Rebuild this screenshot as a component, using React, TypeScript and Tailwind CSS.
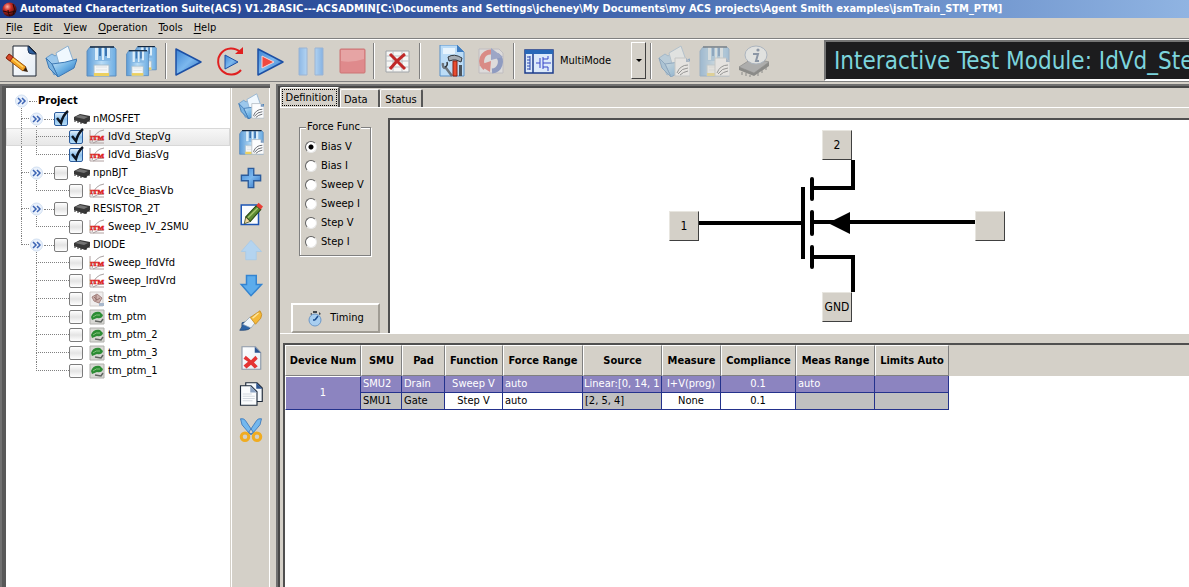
import { useState } from 'react';
import type { ReactNode } from 'react';

/* ---------- icons ---------- */

function Defs() {
  return (
    <svg width="0" height="0" className="absolute" aria-hidden="true">
      <defs>
        <linearGradient id="blue" x1="0" y1="0" x2="1" y2="1">
          <stop offset="0" stopColor="#3c84d4" />
          <stop offset="0.5" stopColor="#7cb8ee" />
          <stop offset="1" stopColor="#2a6cc0" />
        </linearGradient>
        <linearGradient id="folder" x1="0" y1="0" x2="1" y2="1">
          <stop offset="0" stopColor="#d4ebfa" />
          <stop offset="0.5" stopColor="#6bb0e4" />
          <stop offset="1" stopColor="#1f63b4" />
        </linearGradient>
        <linearGradient id="disk" x1="0" y1="0" x2="1" y2="0">
          <stop offset="0" stopColor="#5c9cd8" />
          <stop offset="0.5" stopColor="#b8dcf6" />
          <stop offset="1" stopColor="#6cace2" />
        </linearGradient>
        <linearGradient id="page" x1="0" y1="0" x2="1" y2="1">
          <stop offset="0" stopColor="#ffffff" />
          <stop offset="1" stopColor="#e4ecf4" />
        </linearGradient>
        <linearGradient id="bar" x1="0" y1="0" x2="1" y2="0">
          <stop offset="0" stopColor="#8db8e6" />
          <stop offset="0.5" stopColor="#c6e2f8" />
          <stop offset="1" stopColor="#86b2e2" />
        </linearGradient>
        <radialGradient id="ball" cx="0.35" cy="0.3" r="0.7">
          <stop offset="0" stopColor="#ffb0a4" />
          <stop offset="0.4" stopColor="#c82c24" />
          <stop offset="1" stopColor="#3c0808" />
        </radialGradient>
      </defs>
    </svg>
  );
}

function Icon({ size = 32, children, faded }: { size?: number; children: ReactNode; faded?: boolean }) {
  return (
    <svg width={size} height={size} viewBox="0 0 32 32" fill="none" aria-hidden="true" className={faded ? 'shrink-0 opacity-45' : 'shrink-0'}>
      {children}
    </svg>
  );
}

function NewIcon() {
  return (
    <Icon>
      <path d="M8 1h16l7 7v23H8z" fill="url(#page)" stroke="#1c2430" />
      <path d="M23 1l8 8h-4q-4 0-4-4z" fill="#2f5f9c" stroke="#1c3458" />
      <path d="M4 9l17 13-3 4L1 13z" fill="#f5a623" stroke="#9a5410" />
      <path d="M3 10l15 12" stroke="#ffd76a" strokeWidth="1.5" />
      <path d="M1 13l3-4 4 3-3 4z" fill="#d64a2a" stroke="#8a2414" />
      <path d="M21 22l-3 4 5 1z" fill="#3a2410" />
    </Icon>
  );
}

function FolderShape() {
  return (
    <>
      <path d="M1 13l6-4 3 2 9-6 4 18-14 7z" fill="#9cc8ec" stroke="#6c9cc8" />
      <path d="M11 8l12-7 6 17-13 8z" fill="#f0f8fe" stroke="#8cb0d0" />
      <path d="M7 19q13-1 25-5l-3 9-16 9z" fill="url(#folder)" stroke="#3c78b4" />
      <path d="M1 13l6 6 6 13-9-9z" fill="#7cb4e2" stroke="#3c78b4" />
    </>
  );
}

function DiskShape() {
  return (
    <>
      <path d="M5 2h24l2 2v27H2V6z" fill="url(#disk)" stroke="#5c8cbc" />
      <path d="M8 2h18v14H8z" fill="#84b8e4" />
      <path d="M10 2h3v13h-3zM17 2h2v13h-2zM22 2h3v11h-3z" fill="#dceefa" />
      <path d="M14 3h2v8h-2zM20 3h2v8h-2z" fill="#3c74b0" />
      <path d="M5 2h24" stroke="#14263c" strokeWidth="1.5" />
      <path d="M9 20h15v11H9z" fill="#f4f6f6" stroke="#a4bccc" />
      <path d="M9 28h15v3H9z" fill="#ecd060" />
      <path d="M11 22h11M11 25h11" stroke="#dce0e4" />
    </>
  );
}

/* Small curve sheet laid over the folder and disk icons */
function CurveSheet() {
  return (
    <>
      <path d="M17 13h11l4 4v14H17z" fill="#fbfcfd" stroke="#b4bcc4" />
      <path d="M28 13v4h4z" fill="#7898c0" />
      <path d="M19 28q3-8 11-8M20 29q4-6 10-6M22 30q3-3 8-4" stroke="#4c5058" />
    </>
  );
}

function SaveAllIcon() {
  return (
    <Icon>
      <g transform="translate(9 0) scale(0.72 0.8)"><DiskShape /></g>
      <g transform="translate(0 4) scale(0.76 0.86)"><DiskShape /></g>
    </Icon>
  );
}

function PlayIcon({ inner }: { inner?: boolean }) {
  return (
    <Icon>
      <path d="M4 4l25 13L4 30z" fill="url(#blue)" stroke="#1c4fa4" strokeWidth="1.5" strokeLinejoin="round" />
      {inner && <path d="M8 11l12 6-12 6z" fill="#f04840" stroke="#fcd4d0" />}
    </Icon>
  );
}

function RepeatIcon() {
  return (
    <Icon>
      <path d="M27 7A13 13 0 1 0 28 25" stroke="#e02020" strokeWidth="2" />
      <path d="M22 9h8V2z" fill="#e02020" />
      <path d="M12 10l13 7-13 7z" fill="url(#blue)" stroke="#1c4fa4" strokeLinejoin="round" />
    </Icon>
  );
}

function PauseIcon() {
  return (
    <Icon>
      <path d="M4 3h8v27H4zM20 3h8v27h-8z" fill="url(#bar)" stroke="#9ab4d4" />
    </Icon>
  );
}

function StopIcon() {
  return (
    <Icon>
      <rect x="4" y="4" width="25" height="24" rx="1" fill="#df8a8c" stroke="#cc7474" />
      <path d="M5 5h23v9q-12 4-23 2z" fill="#e6a4a4" />
    </Icon>
  );
}

function ClearGridIcon() {
  return (
    <Icon>
      <path d="M5 6h23v21H5z" fill="#f6f6f4" stroke="#a0a4a8" />
      <path d="M5 11h23M5 16h23M5 22h23M12 6v21M21 6v21" stroke="#bcc0c4" />
      <path d="M9 9q8 8 15 15M24 9q-8 6-15 15" stroke="#c02828" strokeWidth="3" />
    </Icon>
  );
}

function ToolsIcon() {
  return (
    <Icon>
      <path d="M5 0h17l7 7v24H5z" fill="#bcdcf6" stroke="#5890c8" />
      <path d="M22 0v7h7z" fill="#3f7cc0" />
      <path d="M8 3h12v6H8z" fill="#e8f4fd" />
      <path d="M8 18q-1 5 3 5l6 8" stroke="#6c747c" strokeWidth="2.5" />
      <path d="M12 17q1 4-2 5" stroke="#30363c" strokeWidth="1.5" />
      <path d="M13 12q6-4 14 1l-1 4-5-2h-3l-4 1z" fill="#a4acb4" stroke="#30363c" />
      <path d="M18 16h4v15h-4z" fill="#e84c30" stroke="#8c2010" />
      <path d="M24 20h3v11h-3z" fill="#4c545c" />
    </Icon>
  );
}

function RefreshIcon() {
  return (
    <Icon faded>
      <path d="M4 4h20l4 4v20H4z" fill="#e8eaf2" stroke="#a8a8b8" />
      <path d="M16 7A9 9 0 0 0 10 23" stroke="#e03838" strokeWidth="5" />
      <path d="M4 20l11 7 1-11z" fill="#e03838" />
      <path d="M17 26A9 9 0 0 0 22 10" stroke="#3c5cb8" strokeWidth="5" />
      <path d="M28 12L16 3v12z" fill="#5c74c4" />
    </Icon>
  );
}

function ModuleIcon() {
  return (
    <Icon>
      <path d="M2 5h28v23H2z" fill="#dceafa" stroke="#1c3c8c" strokeWidth="1.5" />
      <path d="M2 5h28v4H2z" fill="#2868b8" />
      <path d="M10 9v19" stroke="#1c3c8c" strokeWidth="1.5" />
      <path d="M4 12h3M4 15h3M4 18h3M4 21h3M4 24h3M7 11v14" stroke="#2c48b0" />
      <path d="M13 18h4M17 13v10M20 12v12M20 14h5v-3M20 18h8M20 22h5v4" stroke="#3444c8" />
    </Icon>
  );
}

function InfoChipIcon() {
  return (
    <Icon faded>
      <path d="M1 22l14-9 16 4-15 11z" fill="#80848c" stroke="#54585c" />
      <path d="M1 22l15 6v3L1 25zM16 28l15-11v4L16 31z" fill="#34383c" />
      <path d="M4 27v3M8 28v3M12 30v2M20 28v3M24 25v3M28 22v3" stroke="#34383c" />
      <ellipse cx="18" cy="10" rx="11" ry="9" fill="#f0f6fc" stroke="#7c94b4" />
      <path d="M16 9h4l-2 7h3M15 9h2" stroke="#34507c" strokeWidth="2" />
      <circle cx="20" cy="5" r="1.6" fill="#34507c" />
    </Icon>
  );
}

function PlusIcon() {
  return (
    <Icon size={22}>
      <path d="M12 2h8v10h10v8H20v10h-8V20H2v-8h10z" fill="url(#blue)" stroke="#2c5c9c" strokeWidth="2" />
    </Icon>
  );
}

function EditIcon() {
  return (
    <Icon size={24}>
      <path d="M3 4h23v26H3z" fill="#fafcfe" stroke="#1c54b4" strokeWidth="2" />
      <path d="M9 20L23 5l6 5-14 16z" fill="#5c8c34" stroke="#2c4c14" strokeWidth="1.5" />
      <path d="M12 21L25 8" stroke="#a4c46c" strokeWidth="2" />
      <path d="M9 20l6 6-8 3z" fill="#f0d8a0" stroke="#2c3c14" />
      <path d="M23 5l3-4 6 5-3 4z" fill="#e83c34" />
    </Icon>
  );
}

function ArrowIcon({ down }: { down?: boolean }) {
  return (
    <Icon size={24}>
      {down ? (
        <path d="M10 2h13v12h7L16 29 3 14h7z" fill="#5cacec" stroke="#3484d0" strokeWidth="2" />
      ) : (
        <path d="M16 3L3 18h6v11h14V18h7z" fill="#b4d4f0" stroke="#a4c8e8" />
      )}
    </Icon>
  );
}

function BrushIcon() {
  return (
    <Icon size={24}>
      <path d="M1 27q4-4 3-10 8-3 12 4 0 7-15 6z" fill="#2c64a8" stroke="#1c4070" />
      <path d="M5 19l10-10 8 6-7 9z" fill="#eef4fa" stroke="#8ca0b4" />
      <path d="M15 10l13-9q4 5 1 10l-7 8z" fill="#f4b838" stroke="#c08418" />
      <path d="M18 11l8-7" stroke="#fce49c" strokeWidth="2" />
    </Icon>
  );
}

function DeletePageIcon() {
  return (
    <Icon size={24}>
      <path d="M4 1h18l7 8v22H4z" fill="url(#page)" stroke="#8c98a8" strokeWidth="1.5" />
      <path d="M21 1v8h8z" fill="#2c5490" />
      <path d="M9 13l7 6 6-6 3 4-5 5 5 5-4 3-5-5-6 5-4-4 6-5-6-4z" fill="#e43434" />
    </Icon>
  );
}

function CopyPagesIcon() {
  return (
    <Icon size={24}>
      <path d="M9 1h15l7 7v18H9z" fill="#f4f8fb" stroke="#1c2838" strokeWidth="1.5" />
      <path d="M23 1v8h8z" fill="#2c5490" />
      <path d="M2 5h14l8 8v18H2z" fill="#fafcfd" stroke="#1c2838" strokeWidth="1.5" />
      <path d="M15 5v9h9z" fill="#8ca4c4" />
      <path d="M5 16h12M5 19h16M5 22h16M5 25h13" stroke="#c4ccd4" />
    </Icon>
  );
}

function ScissorsIcon() {
  return (
    <Icon size={24}>
      <path d="M2 1q5-1 7 3l10 15-4 3L4 9zM30 1q-5-1-7 3L13 19l4 3L28 9z" fill="#74b8ee" stroke="#2c6cb4" />
      <circle cx="8" cy="25" r="5" stroke="#f0ac20" strokeWidth="4" />
      <circle cx="24" cy="25" r="5" stroke="#f0ac20" strokeWidth="4" />
    </Icon>
  );
}

function ChipIcon() {
  return (
    <svg width="16" height="16" viewBox="0 0 16 16" aria-hidden="true" className="shrink-0">
      <path d="M0 6l6-3 10 2v4l-5 4-11-4z" fill="#383838" />
      <path d="M1 6l5-2 8 2-4 2z" fill="#747474" />
      <path d="M1 9v2M4 10v2M7 11v2M12 11v2M15 9v2" stroke="#202020" />
    </svg>
  );
}

function ItmIcon() {
  return (
    <svg width="16" height="16" viewBox="0 0 16 16" aria-hidden="true" className="shrink-0">
      <path d="M1 1v13h14" stroke="#b0a0a0" fill="none" />
      <path d="M3 13Q6 2 15 1M4 14q4-3 11-3" stroke="#a8a0a0" fill="none" />
      <text x="8" y="11" textAnchor="middle" fontSize="7" fontWeight="700" fontFamily="Liberation Serif, serif" fill="#dc2020" stroke="#dc2020" strokeWidth="0.5">ITM</text>
    </svg>
  );
}

function StmIcon() {
  return (
    <svg width="16" height="16" viewBox="0 0 16 16" aria-hidden="true" className="shrink-0">
      <path d="M1 1h13v14H1z" fill="#f0eeee" stroke="#d0ccca" />
      <path d="M3 6l5-3 5 4-3 5-5-2z" fill="#ccb0ac" stroke="#a48480" />
      <path d="M5 6l3 3 3-2M7 4v6" stroke="#94706c" fill="none" />
      <path d="M10 12h5v3h-5z" fill="#a8b8cc" />
    </svg>
  );
}

function PtmIcon() {
  return (
    <svg width="16" height="16" viewBox="0 0 16 16" aria-hidden="true" className="shrink-0">
      <path d="M1 1h14v14H1z" fill="#d8d8d4" stroke="#b0b0ac" />
      <path d="M2 8q2-6 9-5l3 3q-1 4-6 3l-5 2z" fill="#2c8c34" />
      <path d="M4 8q3-3 7-2" stroke="#84c47c" fill="none" />
      <path d="M6 12l6 1 2-3" stroke="#606460" fill="none" strokeWidth="1.5" />
    </svg>
  );
}

function StopwatchIcon() {
  return (
    <svg width="16" height="17" viewBox="0 0 16 17" aria-hidden="true">
      <path d="M6 1h4v2H6zM12 2l2 2-2 1zM3 4l2-1v2z" fill="#44484c" />
      <circle cx="8" cy="10" r="6" fill="#a8cef0" stroke="#6c98c8" />
      <path d="M8 10l3-4M8 10H6" stroke="#1c4c8c" strokeWidth="1.5" />
    </svg>
  );
}

/* ---------- project tree ---------- */

type Kind = 'device' | 'itm' | 'stm' | 'ptm';
type Node = { name: string; kind: Kind; checked?: boolean; selected?: boolean; children?: Node[] };

const project: Node[] = [
  {
    name: 'nMOSFET', kind: 'device', checked: true, children: [
      { name: 'IdVd_StepVg', kind: 'itm', checked: true, selected: true },
      { name: 'IdVd_BiasVg', kind: 'itm', checked: true },
    ],
  },
  { name: 'npnBJT', kind: 'device', children: [{ name: 'IcVce_BiasVb', kind: 'itm' }] },
  { name: 'RESISTOR_2T', kind: 'device', children: [{ name: 'Sweep_IV_2SMU', kind: 'itm' }] },
  {
    name: 'DIODE', kind: 'device', children: [
      { name: 'Sweep_IfdVfd', kind: 'itm' },
      { name: 'Sweep_IrdVrd', kind: 'itm' },
      { name: 'stm', kind: 'stm' },
      { name: 'tm_ptm', kind: 'ptm' },
      { name: 'tm_ptm_2', kind: 'ptm' },
      { name: 'tm_ptm_3', kind: 'ptm' },
      { name: 'tm_ptm_1', kind: 'ptm' },
    ],
  },
];

const kindIcon: Record<Kind, ReactNode> = {
  device: <ChipIcon />,
  itm: <ItmIcon />,
  stm: <StmIcon />,
  ptm: <PtmIcon />,
};

/* Dotted connector: a vertical line down the left, with a branch to the right at half height */
function Branch({ width, last }: { width: string; last?: boolean }) {
  return (
    <span className={`${width} flex flex-col shrink-0`}>
      <span className="h-[9px] border-l border-b border-dotted border-[#808080]" />
      <span className={last ? 'h-[9px]' : 'h-[9px] border-l border-dotted border-[#808080]'} />
    </span>
  );
}

function Expander({ label }: { label: string }) {
  return (
    <button type="button" aria-label={`Collapse ${label}`} className="w-[15px] h-[18px] shrink-0">
      <svg width="15" height="18" viewBox="0 0 15 18" fill="none" aria-hidden="true">
        <path d="M7.5 16v2" stroke="#808080" strokeDasharray="1 1" />
        <circle cx="7.5" cy="9" r="6" fill="#eaf1fb" stroke="#d0dff2" />
        <path d="M4 6l3 3-3 3M8 6l3 3-3 3" stroke="#3c64b4" strokeWidth="1.5" />
      </svg>
    </button>
  );
}

function TreeItem({ node }: { node: Node }) {
  const [checked, setChecked] = useState(!!node.checked);
  return (
    <label className="flex items-center whitespace-nowrap">
      <span className="relative flex">
        <input
          type="checkbox"
          checked={checked}
          onChange={(e) => setChecked(e.target.checked)}
          className="appearance-none w-[14px] h-[14px] rounded-[2px] border border-[#7c7c7c] bg-linear-to-b from-white via-[#e4e4e4] to-white checked:border-[#2c5c9c] checked:from-[#e0f0fc] checked:via-[#8cc0ec] checked:to-[#b4dcf8]"
        />
        {checked && (
          <svg width="16" height="16" viewBox="0 0 16 16" fill="none" aria-hidden="true" className="absolute -top-0.5 left-0 pointer-events-none">
            <path d="M3 8l4 5q2-8 7-12" stroke="#0c1420" strokeWidth="2.5" />
          </svg>
        )}
      </span>
      <span className="ml-[6px] mr-[3px]">{kindIcon[node.kind]}</span>
      {node.name}
    </label>
  );
}

function ProjectTree() {
  return (
    <ul className="flex-1 min-w-0 bg-white pt-1 mr-px overflow-hidden">
      <li>
        <div className="flex items-center h-[18px] pl-[8px]">
          <Expander label="Project" />
          <span className="w-[8px] border-b border-dotted border-[#808080]" />
          <span className="font-bold ml-px">Project</span>
        </div>
        <ul>
          {project.map((device, i) => {
            const lastDevice = i === project.length - 1;
            return (
              <li key={device.name}>
                <div className="flex items-center h-[18px] pl-[15px]">
                  <Branch width="w-[8px]" last={lastDevice} />
                  <Expander label={device.name} />
                  <span className="w-[10px] border-b border-dotted border-[#808080]" />
                  <TreeItem node={device} />
                </div>
                <ul>
                  {device.children?.map((child, j) => (
                    <li
                      key={child.name}
                      className={`flex items-center h-[18px] pl-[15px] ${child.selected ? 'bg-linear-to-b from-[#f8f8f8] to-[#e6e6e6] outline outline-1 -outline-offset-1 outline-[#d8d8d8]' : ''}`}
                    >
                      <span className={lastDevice ? 'w-[15px] h-full' : 'w-[15px] h-full border-l border-dotted border-[#808080]'} />
                      <Branch width="w-[33px]" last={j === device.children!.length - 1} />
                      <TreeItem node={child} />
                    </li>
                  ))}
                </ul>
              </li>
            );
          })}
        </ul>
      </li>
    </ul>
  );
}

/* ---------- bars ---------- */

function ToolButton({ label, width = 'w-10', children }: { label: string; width?: string; children: ReactNode }) {
  return (
    <button type="button" aria-label={label} className={`${width} h-10 shrink-0 flex items-center justify-center`}>
      {children}
    </button>
  );
}

function Separator() {
  return <span className="w-[2px] h-9 shrink-0 border-l border-l-[#808080] border-r border-r-white" />;
}

function TitleBar() {
  return (
    <header className="h-[18px] shrink-0 flex items-center gap-[3px] px-[2px] bg-linear-to-r from-[#1c3a8a] via-[#4064ac] to-[#90b4e2] text-white font-bold whitespace-nowrap overflow-hidden">
      <svg width="15" height="15" viewBox="0 0 15 15" aria-hidden="true" className="shrink-0">
        <circle cx="7.5" cy="7.5" r="7" fill="url(#ball)" />
        <path d="M1 9q6 3 13 0M11 2q3 5 0 11M6 8q0 4 2 6" stroke="#240808" fill="none" />
      </svg>
      Automated Characterization Suite(ACS) V1.2BASIC---ACSADMIN[C:\Documents and Settings\jcheney\My Documents\my ACS projects\Agent Smith examples\jsmTrain_STM_PTM]
    </header>
  );
}

const menus = ['File', 'Edit', 'View', 'Operation', 'Tools', 'Help'];

function MenuBar() {
  return (
    <nav className="h-[21px] shrink-0 flex items-center gap-[11px] px-[6px] border-b border-[#808080]">
      {menus.map((menu) => (
        <button key={menu} type="button">
          <span className="underline underline-offset-2">{menu[0]}</span>{menu.slice(1)}
        </button>
      ))}
    </nav>
  );
}

function Toolbar() {
  return (
    <div className="h-[43px] shrink-0 flex items-center border-t border-b border-t-white border-b-[#808080] overflow-hidden">
      <div className="flex pl-px pr-[4px]">
        <ToolButton label="New"><NewIcon /></ToolButton>
        <ToolButton label="Open"><Icon><FolderShape /></Icon></ToolButton>
        <ToolButton label="Save"><Icon><DiskShape /></Icon></ToolButton>
        <ToolButton label="Save all"><SaveAllIcon /></ToolButton>
      </div>
      <Separator />
      <div className="flex pr-px">
        <ToolButton width="w-[41px]" label="Run"><PlayIcon /></ToolButton>
        <ToolButton width="w-[41px]" label="Repeat"><RepeatIcon /></ToolButton>
        <ToolButton width="w-[41px]" label="Append run"><PlayIcon inner /></ToolButton>
        <ToolButton width="w-[41px]" label="Pause"><PauseIcon /></ToolButton>
        <ToolButton width="w-[41px]" label="Stop"><StopIcon /></ToolButton>
      </div>
      <Separator />
      <ToolButton width="w-[44px]" label="Clear data"><ClearGridIcon /></ToolButton>
      <Separator />
      <div className="flex pl-[10px] pr-[2px]">
        <ToolButton label="Preferences"><ToolsIcon /></ToolButton>
        <ToolButton label="Refresh"><RefreshIcon /></ToolButton>
      </div>
      <Separator />
      <label className="w-[135px] shrink-0 flex items-center pl-[8px] pr-[4px]" aria-label="Mode">
        <ModuleIcon />
        <select className="appearance-none flex-1 min-w-0 h-9 pl-[5px] bg-transparent outline-none">
          <option>MultiMode</option>
        </select>
        <span className="w-[15px] h-[37px] flex items-center justify-center bg-[#d4d0c8] border border-t-white border-l-white border-b-[#404040] border-r-[#404040] pointer-events-none">
          <span className="border-x-[3px] border-t-[3px] border-x-transparent border-t-black" />
        </span>
      </label>
      <Separator />
      <div className="flex pl-[2px] pr-[50px]">
        <ToolButton label="Import"><Icon faded><FolderShape /><CurveSheet /></Icon></ToolButton>
        <ToolButton label="Export"><Icon faded><DiskShape /><CurveSheet /></Icon></ToolButton>
        <ToolButton label="Device info"><InfoChipIcon /></ToolButton>
      </div>
      <div className="flex-1 min-w-0 h-[41px] flex items-center pl-2 bg-[#1c1c1e] border-2 border-r-0 border-t-[#747474] border-l-[#747474] border-b-white text-[24px] text-[#7cd4dc] whitespace-nowrap overflow-hidden">
        Interactive Test Module: IdVd_StepVg
      </div>
    </div>
  );
}

function SideTools() {
  return (
    <div className="w-[39px] shrink-0 flex flex-col items-center border-l border-l-white border-r border-r-white bg-[#d4d0c8] [&>button]:h-9">
      <ToolButton label="Open module"><Icon size={26}><FolderShape /><CurveSheet /></Icon></ToolButton>
      <ToolButton label="Save module"><Icon size={26}><DiskShape /><CurveSheet /></Icon></ToolButton>
      <ToolButton label="Add"><PlusIcon /></ToolButton>
      <ToolButton label="Rename"><EditIcon /></ToolButton>
      <ToolButton label="Move up"><ArrowIcon /></ToolButton>
      <ToolButton label="Move down"><ArrowIcon down /></ToolButton>
      <ToolButton label="Clean"><BrushIcon /></ToolButton>
      <ToolButton label="Delete"><DeletePageIcon /></ToolButton>
      <ToolButton label="Copy"><CopyPagesIcon /></ToolButton>
      <ToolButton label="Cut"><ScissorsIcon /></ToolButton>
    </div>
  );
}

/* ---------- module editor ---------- */

function Tabs() {
  const tab = 'border-t border-t-white border-l border-l-white border-r-2 border-r-[#585858] rounded-t-[2px]';
  return (
    <div role="tablist" className="flex items-end h-[20px] shrink-0 border-b border-white">
      <button type="button" role="tab" aria-selected="true" className={`${tab} h-[20px] w-[60px] p-px`}>
        <span className="flex h-full items-center justify-center border border-dotted border-black">Definition</span>
      </button>
      <button type="button" role="tab" aria-selected="false" className={`${tab} h-[18px] w-[40px] pl-[3px] pt-[2px] text-left`}>Data</button>
      <button type="button" role="tab" aria-selected="false" className={`${tab} h-[18px] w-[43px] pt-[2px]`}>Status</button>
    </div>
  );
}

const forceFuncs = ['Bias V', 'Bias I', 'Sweep V', 'Sweep I', 'Step V', 'Step I'];

function ForceFunc() {
  const [func, setFunc] = useState('Bias V');
  return (
    <fieldset className="w-[72px] h-[136px] pl-[5px] border border-[#808080] shadow-[1px_1px_0_#fff,inset_1px_1px_0_#fff]">
      <legend className="ml-px px-px bg-[#d4d0c8] whitespace-nowrap">Force Func</legend>
      <div className="flex flex-col pt-[3px]">
        {forceFuncs.map((name) => (
          <label key={name} className="h-[19px] flex items-center gap-1 whitespace-nowrap">
            <input
              type="radio"
              name="force"
              checked={func === name}
              onChange={() => setFunc(name)}
              className="appearance-none shrink-0 w-3 h-3 rounded-full border border-t-[#606060] border-l-[#606060] border-b-[#e8e8e8] border-r-[#e8e8e8] bg-white checked:bg-[radial-gradient(circle,#000_2px,#fff_3px)]"
            />
            {name}
          </label>
        ))}
      </div>
    </fieldset>
  );
}

function Terminal({ place, children }: { place: string; children?: ReactNode }) {
  return (
    <button
      type="button"
      aria-label={children ? undefined : 'Bulk terminal'}
      className={`${place} absolute w-[30px] h-[30px] flex items-center justify-center text-[12px] bg-[#d4d0c8] border border-t-[#e8e6e0] border-l-[#e8e6e0] border-b-[#404040] border-r-[#404040]`}
    >
      {children}
    </button>
  );
}

function Schematic() {
  return (
    <div className="flex-1 min-w-0 bg-white border-t-2 border-l-2 border-[#505050] overflow-hidden pt-[10px] pl-[279px]">
      <div className="relative w-[336px] h-[192px]">
        <svg width="336" height="192" viewBox="0 0 336 192" fill="none" stroke="#000" strokeWidth="4" aria-hidden="true">
          <path d="M30 93h104M134 57v72" />
          <path d="M143 49v20M143 82v22M143 117v20" strokeLinecap="round" />
          <path d="M143 92h163" />
          <path d="M143 58h41V30" />
          <path d="M143 127h41v35" />
          <path d="M159 93l22-11v22z" fill="#000" stroke="none" />
        </svg>
        <Terminal place="left-[153px] top-0">2</Terminal>
        <Terminal place="left-0 top-[81px]">1</Terminal>
        <Terminal place="left-[306px] top-[81px]" />
        <Terminal place="left-[153px] top-[162px]">GND</Terminal>
      </div>
    </div>
  );
}

const headers = ['Device Num', 'SMU', 'Pad', 'Function', 'Force Range', 'Source', 'Measure', 'Compliance', 'Meas Range', 'Limits Auto'];

function SettingsTable() {
  const cell = 'h-[17px] border-r border-b border-[#24328c] whitespace-nowrap overflow-hidden';
  const locked = `${cell} bg-[#c0c0c0] pl-[2px]`;
  const picked = `${cell} bg-[#8c84c0] text-white`;
  return (
    <div className="flex-1 min-h-0 bg-white border-t-2 border-l-2 border-[#505050] overflow-hidden">
      <div className="bg-[#d4d0c8] h-[31px]">
        <table className="table-fixed w-[664px] border-separate border-spacing-0">
          <colgroup>
            <col className="w-[76px]" />
            <col className="w-[41px]" />
            <col className="w-[43px]" />
            <col className="w-[58px]" />
            <col className="w-[80px]" />
            <col className="w-[79px]" />
            <col className="w-[59px]" />
            <col className="w-[75px]" />
            <col className="w-[79px]" />
            <col className="w-[74px]" />
          </colgroup>
          <thead>
            <tr>
              {headers.map((header) => (
                <th key={header} scope="col" className="h-[31px] p-0 border-t border-l border-t-white border-l-white border-r border-b border-r-[#808080] border-b-[#808080] whitespace-nowrap">
                  {header}
                </th>
              ))}
            </tr>
          </thead>
          <tbody>
            <tr>
              <td rowSpan={2} className="p-0 text-center text-white bg-[#8c84c0] border border-t-white border-l-white border-r-[#24328c] border-b-[#24328c]">1</td>
              <td className={`${picked} pl-[2px]`}>SMU2</td>
              <td className={`${picked} pl-[2px]`}>Drain</td>
              <td className={`${picked} text-center`}>Sweep V</td>
              <td className={`${picked} pl-[2px]`}>auto</td>
              <td className={`${picked} pl-px`}>Linear:[0, 14, 1</td>
              <td className={`${picked} text-center`}>I+V(prog)</td>
              <td className={`${picked} text-center`}>0.1</td>
              <td className={`${picked} pl-[2px]`}>auto</td>
              <td className={picked} />
            </tr>
            <tr>
              <td className={locked}>SMU1</td>
              <td className={locked}>Gate</td>
              <td className={`${cell} text-center`}>Step V</td>
              <td className={`${cell} pl-[2px]`}>auto</td>
              <td className={locked}>[2, 5, 4]</td>
              <td className={`${cell} text-center`}>None</td>
              <td className={`${cell} text-center`}>0.1</td>
              <td className={locked} />
              <td className={locked} />
            </tr>
          </tbody>
        </table>
      </div>
    </div>
  );
}

export default function App() {
  return (
    <div className="h-screen flex flex-col overflow-hidden bg-[#d4d0c8] text-black text-[11px] leading-[14px] font-['Tahoma','DejaVu_Sans_Condensed','DejaVu_Sans',sans-serif]">
      <Defs />
      <TitleBar />
      <MenuBar />
      <Toolbar />
      <div className="flex-1 min-h-0 flex pt-[2px] gap-[6px]">
        <aside className="w-[270px] shrink-0 flex border-t-2 border-l-2 border-[#707070]">
          <div className="flex-1 min-w-0 flex border-l-4 border-t-2 border-[#585858]">
            <ProjectTree />
            <SideTools />
          </div>
        </aside>
        <main className="flex-1 min-w-0 flex flex-col border-t-2 border-l-2 border-[#707070]">
          <div className="flex-1 min-h-0 flex flex-col border-l-2 border-t-2 border-[#484848]">
            <Tabs />
            <div className="h-[225px] shrink-0 flex pt-[10px]">
              <div className="w-[108px] shrink-0 flex flex-col justify-between pl-[11px]">
                <div className="pl-[8px] pt-[2px]">
                  <ForceFunc />
                </div>
                <button type="button" className="w-[89px] h-[30px] flex items-center justify-center gap-[7px] border-2 border-t-white border-l-white border-b-[#a09c94] border-r-[#a09c94]">
                  <StopwatchIcon />
                  Timing
                </button>
              </div>
              <Schematic />
            </div>
            <div className="h-[10px] shrink-0 border-t border-white" />
            <div className="flex-1 min-h-0 flex flex-col pl-[3px]">
              <SettingsTable />
            </div>
          </div>
        </main>
      </div>
    </div>
  );
}
